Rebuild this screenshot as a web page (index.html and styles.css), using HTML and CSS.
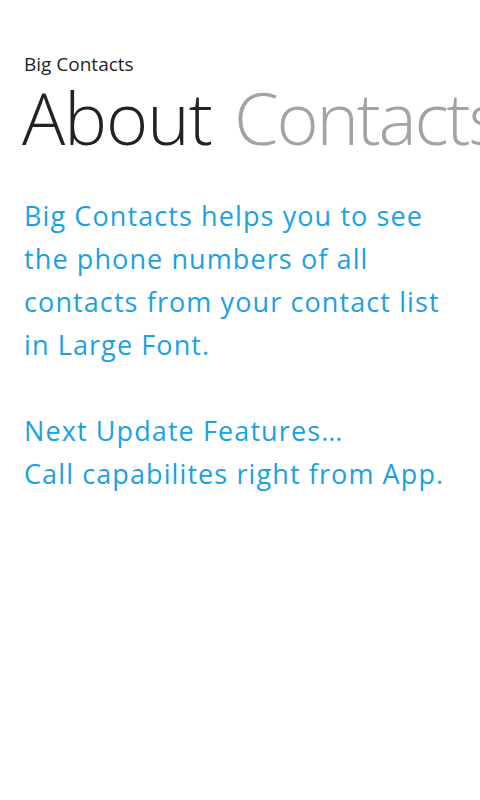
FILE: index.html
```html
<!DOCTYPE html>
<html>
<head>
<meta charset="utf-8">
<link rel="stylesheet" href="styles.css">
</head>
<body>
<div class="page">
  <div class="app-title">Big Contacts</div>
  <div class="pivot">
    <span class="pivot-item active">About</span>
    <span class="pivot-item">Contacts</span>
  </div>
  <div class="content">
    <p class="para">Big Contacts helps you to see the phone numbers of all contacts from your contact list in Large Font.</p>
    <p class="para">Next Update Features<span class="dots">...</span><br>Call capabilites right from App.</p>
  </div>
</div>
</body>
</html>
```
FILE: styles.css
```css
html, body {
  margin: 0;
  padding: 0;
  background: #ffffff;
}
body {
  font-family: "Open Sans", "Noto Sans", sans-serif;
  width: 480px;
  height: 800px;
  overflow: hidden;
}
.page {
  padding: 51px 0 0 24px;
}
.app-title {
  font-size: 19px;
  line-height: 26px;
  color: #1f1f1f;
}
.pivot {
  display: flex;
  gap: 22px;
  white-space: nowrap;
  overflow: hidden;
  font-size: 72px;
  font-weight: 300;
  line-height: 80px;
  letter-spacing: -1px;
  margin-left: -2px;
}
.pivot-item {
  flex: none;
  color: #a3a3a3;
  letter-spacing: -2.2px;
}
.pivot-item.active {
  color: #222222;
  letter-spacing: -1px;
}
.content {
  padding-top: 37px;
  width: 440px;
}
.para {
  margin: 0 0 43px 0;
  font-size: 27px;
  line-height: 43px;
  letter-spacing: 1.1px;
  color: #1ba1e2;
}
.dots {
  letter-spacing: 0;
}
```
